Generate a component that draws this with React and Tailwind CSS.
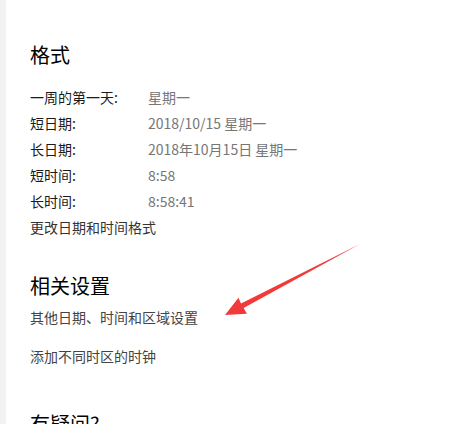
import React from "react";

const rows = [
  ["一周的第一天:", "星期一"],
  ["短日期:", "2018/10/15 星期一"],
  ["长日期:", "2018年10月15日 星期一"],
  ["短时间:", "8:58"],
  ["长时间:", "8:58:41"],
];

const font = { fontFamily: '"Noto Sans CJK SC", "Noto Sans", sans-serif' };

const App = () => {
  return (
    <div className="relative flex h-[424px] w-[459px] overflow-hidden bg-white" style={font}>
      {/* left strip */}
      <div className="w-[6px] shrink-0 bg-[#f2f2f2]" />

      {/* content */}
      <div className="flex flex-1 flex-col pl-[24px] pt-[41px]">
        <h2 className="text-[20px] leading-[28px] text-black">格式</h2>

        <div className="mt-[15px] flex flex-col">
          {rows.map(([label, value]) => (
            <div key={label} className="flex text-[14px] leading-[26px]">
              <span className="w-[118px] text-[#1a1a1a]">{label}</span>
              <span className="text-[#767676]">{value}</span>
            </div>
          ))}
          <span className="text-[14px] leading-[26px] text-[#333]">更改日期和时间格式</span>
        </div>

        <h2 className="mt-[32px] text-[20px] leading-[28px] text-black">相关设置</h2>
        <span className="mt-[4px] text-[14px] leading-[26px] text-[#444]">其他日期、时间和区域设置</span>
        <span className="mt-[13px] text-[14px] leading-[26px] text-[#444]">添加不同时区的时钟</span>

        <h2 className="mt-[41px] text-[20px] leading-[28px] text-black">有疑问?</h2>
      </div>

      {/* annotation arrow */}
      <svg className="pointer-events-none absolute left-0 top-0" width="459" height="424">
        <polygon
          points="360,244 243.6,307.9 246.9,313.7 225,315 238.5,297.7 241.0,303.5"
          fill="#f23a3a"
        />
      </svg>
    </div>
  );
};

export default App;
